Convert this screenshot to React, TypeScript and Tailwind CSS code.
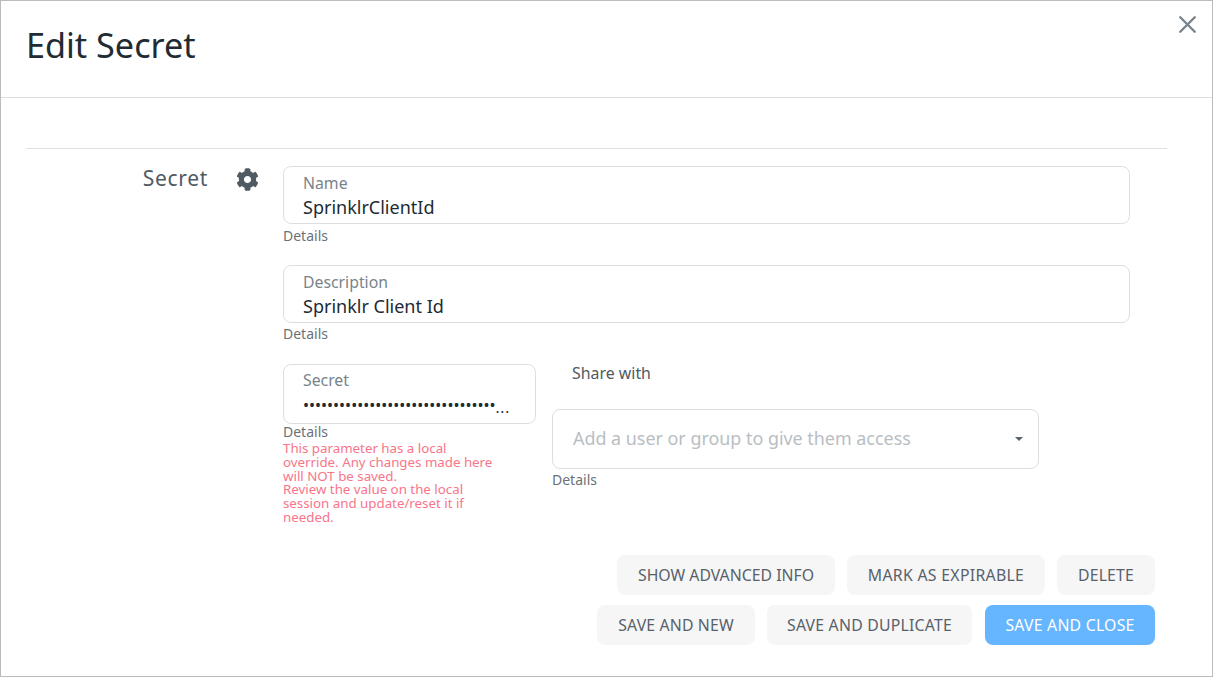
import { X } from "lucide-react";

const font = "font-['Noto_Sans',sans-serif]";

function Field({ label, value }: { label: string; value: string }) {
  return (
    <div className="h-[58px] rounded-lg border border-[#dcdfe2] px-[19px] pt-[6px]">
      <div className="text-[15.8px] leading-[20px] text-[#78838c]">{label}</div>
      <div className="text-[18px] leading-[24px] mt-[2px] text-[#212b33]">{value}</div>
    </div>
  );
}

function Details() {
  return <div className="text-[14px] leading-[16px] text-[#6a7278]">Details</div>;
}

function Btn({ children, width, primary }: { children: string; width: string; primary?: boolean }) {
  return (
    <button
      className={`h-10 pt-[1px] rounded-lg text-[15.8px] ${width} ${
        primary ? "bg-[#66b5ff] text-white" : "bg-[#f6f6f6] text-[#58616a]"
      }`}
    >
      {children}
    </button>
  );
}

function GearIcon() {
  return (
    <svg viewBox="0 0 512 512" className="w-[23px] h-[23px] fill-[#4f5a62]">
      <path d="M487.4 315.7l-42.6-24.6c4.3-23.2 4.3-47 0-70.2l42.6-24.6c4.9-2.8 7.1-8.6 5.5-14-11.1-35.6-30-67.8-54.7-94.6-3.8-4.1-10-5.1-14.8-2.3L380.8 110c-17.9-15.4-38.5-27.3-60.8-35.1V25.8c0-5.6-3.9-10.5-9.4-11.7-36.7-8.2-74.3-7.8-109.2 0-5.5 1.2-9.4 6.1-9.4 11.7V75c-22.2 7.9-42.8 19.8-60.8 35.1L88.7 85.5c-4.9-2.8-11-1.9-14.8 2.3-24.7 26.7-43.6 58.9-54.7 94.6-1.7 5.4.6 11.2 5.5 14L67.3 221c-4.3 23.2-4.3 47 0 70.2l-42.6 24.6c-4.9 2.8-7.1 8.6-5.5 14 11.1 35.6 30 67.8 54.7 94.6 3.8 4.1 10 5.1 14.8 2.3l42.6-24.6c17.9 15.4 38.5 27.3 60.8 35.1v49.2c0 5.6 3.9 10.5 9.4 11.7 36.7 8.2 74.3 7.8 109.2 0 5.5-1.2 9.4-6.1 9.4-11.7v-49.2c22.2-7.9 42.8-19.8 60.8-35.1l42.6 24.6c4.9 2.8 11 1.9 14.8-2.3 24.7-26.7 43.6-58.9 54.7-94.6 1.5-5.5-.7-11.3-5.6-14.1zM256 336c-44.1 0-80-35.9-80-80s35.9-80 80-80 80 35.9 80 80-35.9 80-80 80z" />
    </svg>
  );
}

export default function App() {
  return (
    <div className={`relative w-[1213px] h-[677px] overflow-hidden border border-[#bcbcbc] bg-white ${font}`}>
      <button className="absolute right-[10px] top-[9px] text-[#78838c]">
        <X size={29} strokeWidth={2} />
      </button>

      <div className="h-[97px] border-b border-[#dddddd] pl-[25px] pt-[22px]">
        <h1 className="text-[34.2px] leading-[44px] text-[#212b33]">Edit Secret</h1>
      </div>

      <div className="ml-[25px] mr-[45px] mt-[50px] border-t border-[#e0e0e0] pt-[16px] flex">
        <div className="w-[182px] flex justify-end">
          <span className="text-[21px] leading-[26px] text-[#4f5a62] tracking-[0.7px]">Secret</span>
        </div>
        <div className="ml-[28px] pt-[3px] w-[22px] shrink-0">
          <GearIcon />
        </div>
        <div className="ml-[25px] w-[847px] pt-[1px]">
          <Field label="Name" value="SprinklrClientId" />
          <div className="mt-[4px]">
            <Details />
          </div>

          <div className="mt-[21px]">
            <Field label="Description" value="Sprinklr Client Id" />
          </div>
          <div className="mt-[3px]">
            <Details />
          </div>

          <div className="mt-[22px] flex">
            <div className="w-[253px]">
              <div className="h-[60px] rounded-lg border border-[#dcdfe2] pl-[19px] pr-[22px] pt-[5px]">
                <div className="text-[15.8px] leading-[20px] text-[#78838c]">Secret</div>
                <div className="flex items-end h-[24px] mt-[3px] text-[#212b33]">
                  <span className="text-[16px] leading-[24px] overflow-hidden whitespace-nowrap">
                    {"•".repeat(32)}
                  </span>
                  <span className="text-[15px] leading-[20px] tracking-[0.8px] shrink-0">...</span>
                </div>
              </div>
              <Details />
              <div className="w-[215px] mt-[2px] text-[13.3px] leading-[13.8px] text-[#f8758a]">
                <div>This parameter has a local override. Any changes made here will NOT be saved.</div>
                <div>Review the value on the local session and update/reset it if needed.</div>
              </div>
            </div>

            <div className="ml-[16px] w-[487px]">
              <div className="pl-[20px] text-[15.9px] leading-[18px] text-[#4f5a62]">Share with</div>
              <div className="mt-[27px] h-[60px] rounded-lg border border-[#dcdfe2] pl-[20px] pr-[15px] pb-[2px] flex items-center justify-between">
                <span className="text-[17.9px] leading-[24px] text-[#b8bec3]">Add a user or group to give them access</span>
                <span className="w-0 h-0 mt-[2px] border-x-[4.5px] border-x-transparent border-t-[4.5px] border-t-[#5b646b]" />
              </div>
              <div className="mt-[3px]">
                <Details />
              </div>
            </div>
          </div>
        </div>
      </div>

      <div className="absolute right-[57px] bottom-[31px] flex flex-col items-end gap-[10px]">
        <div className="flex gap-3">
          <Btn width="w-[218px]">SHOW ADVANCED INFO</Btn>
          <Btn width="w-[198px] tracking-[0.3px]">MARK AS EXPIRABLE</Btn>
          <Btn width="w-[98px] tracking-[0.15px]">DELETE</Btn>
        </div>
        <div className="flex gap-3">
          <Btn width="w-[158px] tracking-[0.15px]">SAVE AND NEW</Btn>
          <Btn width="w-[205px] mr-[1px] tracking-[0.22px]">SAVE AND DUPLICATE</Btn>
          <Btn width="w-[170px] tracking-[0.22px]" primary>
            SAVE AND CLOSE
          </Btn>
        </div>
      </div>
    </div>
  );
}
